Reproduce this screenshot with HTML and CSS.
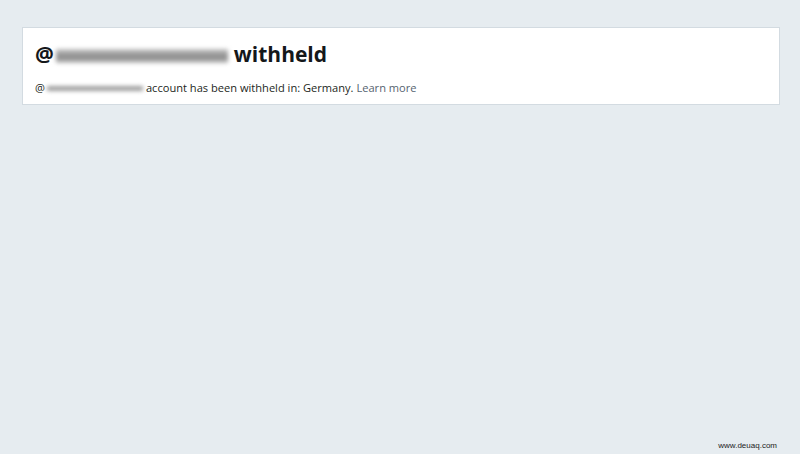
FILE: index.html
```html
<!DOCTYPE html>
<html lang="en">
<head>
<meta charset="utf-8">
<title>Account withheld</title>
<link rel="stylesheet" href="styles.css">
</head>
<body>
<main class="page">
  <section class="card">
    <h1 class="title">@<span class="blur blur-lg"></span>withheld</h1>
    <p class="desc">@<span class="blur blur-sm"></span>account has been withheld in: Germany. <a class="link" href="#">Learn more</a></p>
  </section>
  <footer class="mark">www.deuaq.com</footer>
</main>
</body>
</html>
```
FILE: styles.css
```css
html, body {
  margin: 0;
  padding: 0;
  background: #e6ecf0;
}
.page {
  height: 454px;
  box-sizing: border-box;
  padding: 27px 20px 0 22px;
  display: flex;
  flex-direction: column;
  font-family: "Open Sans", "Noto Sans", sans-serif;
}
.card {
  background: #ffffff;
  border: 1px solid #d3dbe1;
  height: 78px;
  box-sizing: border-box;
  padding: 10px 12px 0 12px;
}
.title {
  margin: 0;
  font-size: 21px;
  font-weight: 700;
  color: #14171a;
  line-height: 32px;
  display: flex;
  align-items: center;
}
.desc {
  margin: 10px 0 0 0;
  font-size: 11.1px;
  color: #1c1f22;
  line-height: 16px;
  display: flex;
  align-items: center;
  white-space: pre;
}
.link {
  color: #566370;
  text-decoration: none;
}
.blur {
  display: inline-block;
  filter: blur(2px);
}
.blur-lg {
  width: 172px;
  height: 14px;
  margin: 4px 6px 0 2px;
  background: linear-gradient(180deg, #c8c8c8 0%, #9a9a9a 40%, #8a8a8a 60%, #c4c4c4 100%);
}
.blur-sm {
  width: 96px;
  height: 5px;
  margin: 0 3px 0 2px;
  background: linear-gradient(180deg, #bbb 0%, #888 50%, #bbb 100%);
}
.mark {
  margin-top: auto;
  align-self: flex-end;
  margin-right: 3px;
  margin-bottom: 4px;
  font-family: "Liberation Sans", Arial, sans-serif;
  font-size: 8px;
  color: #222;
}
```
